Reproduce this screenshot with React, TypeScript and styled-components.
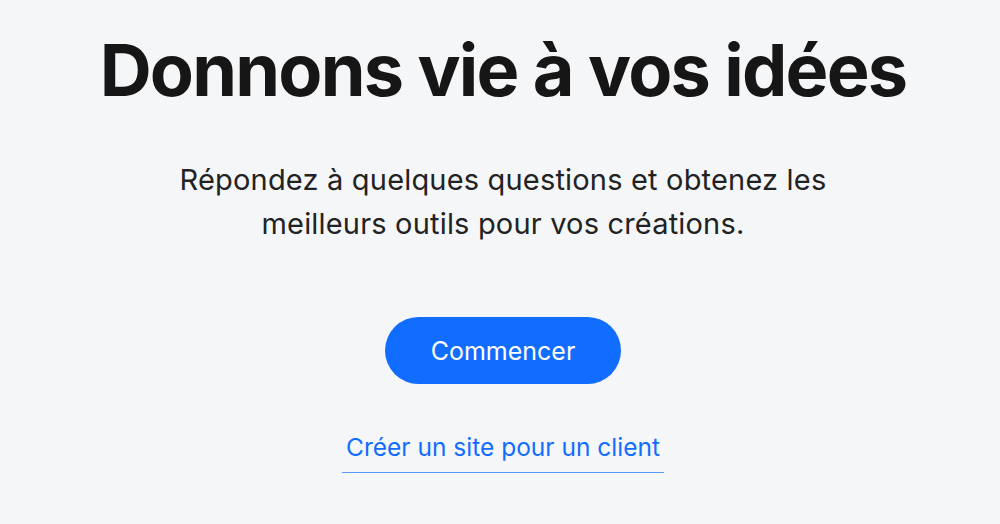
import React from "react";
import styled, { createGlobalStyle } from "styled-components";

const Global = createGlobalStyle`
  html, body { margin: 0; padding: 0; background: #f5f6f8; }
  body { font-family: Inter, "Noto Sans", sans-serif; }
`;

const Page = styled.main`
  width: 1000px;
  height: 524px;
  box-sizing: border-box;
  padding: 28px 0 0 6px;
  display: flex;
  flex-direction: column;
  align-items: center;
  background: #f5f6f8;
  overflow: hidden;
`;

const Title = styled.h1`
  margin: 0;
  font-size: 72px;
  font-weight: 700;
  line-height: 84px;
  letter-spacing: -1.8px;
  color: #161616;
`;

const Subtitle = styled.p`
  margin: 46px 0 0;
  font-size: 29px;
  line-height: 44px;
  font-weight: 400;
  letter-spacing: 0.18px;
  color: #222;
  text-align: center;
`;

const PrimaryButton = styled.button`
  margin-top: 71px;
  width: 236px;
  height: 67px;
  border: none;
  border-radius: 34px;
  background: #116dff;
  color: #fff;
  font-family: inherit;
  font-size: 25px;
  font-weight: 400;
  cursor: pointer;
`;

const Link = styled.a`
  margin-top: 48px;
  padding: 0 4px 10px;
  font-size: 24.5px;
  color: #116dff;
  text-decoration: none;
  border-bottom: 1px solid #5b9bff;
`;

export default function App() {
  return (
    <>
      <Global />
      <Page>
        <Title>Donnons vie à vos idées</Title>
        <Subtitle>
          Répondez à quelques questions et obtenez les
          <br />
          meilleurs outils pour vos créations.
        </Subtitle>
        <PrimaryButton>Commencer</PrimaryButton>
        <Link href="#">Créer un site pour un client</Link>
      </Page>
    </>
  );
}
